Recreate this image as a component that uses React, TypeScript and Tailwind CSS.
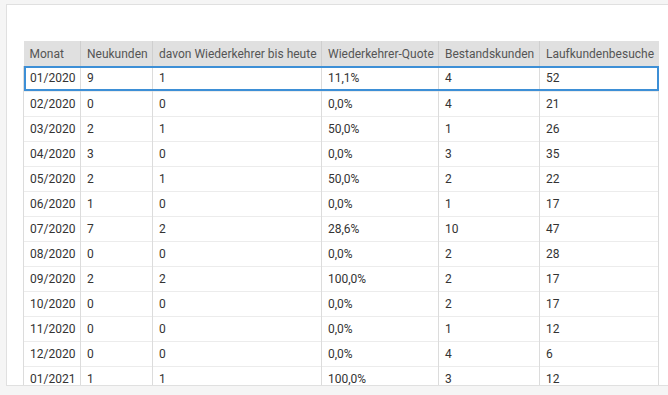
const rows: string[][] = [
  ["01/2020", "9", "1", "11,1%", "4", "52"],
  ["02/2020", "0", "0", "0,0%", "4", "21"],
  ["03/2020", "2", "1", "50,0%", "1", "26"],
  ["04/2020", "3", "0", "0,0%", "3", "35"],
  ["05/2020", "2", "1", "50,0%", "2", "22"],
  ["06/2020", "1", "0", "0,0%", "1", "17"],
  ["07/2020", "7", "2", "28,6%", "10", "47"],
  ["08/2020", "0", "0", "0,0%", "2", "28"],
  ["09/2020", "2", "2", "100,0%", "2", "17"],
  ["10/2020", "0", "0", "0,0%", "2", "17"],
  ["11/2020", "0", "0", "0,0%", "1", "12"],
  ["12/2020", "0", "0", "0,0%", "4", "6"],
  ["01/2021", "1", "1", "100,0%", "3", "12"],
];

const headers = [
  "Monat",
  "Neukunden",
  "davon Wiederkehrer bis heute",
  "Wiederkehrer-Quote",
  "Bestandskunden",
  "Laufkundenbesuche",
];

const widths = ["w-[57px]", "w-[72px]", "w-[169px]", "w-[117px]", "w-[101px]", "w-[119px]"];

export default function App() {
  return (
    <div
      className="w-[668px] h-[395px] bg-[#f5f5f5] pl-[6px] pt-[4px] overflow-hidden"
      style={{ fontFamily: "Roboto, 'Liberation Sans', sans-serif" }}
    >
      <div className="h-[382px] bg-white border-l border-t border-b border-[#e0e0e0] pl-[16px] pt-[36px] overflow-hidden">
        <table className="table-fixed border-collapse w-[635px] text-[12px]">
          <thead>
            <tr className="h-[25px] bg-[#e0e0e0] text-[#555]">
              {headers.map((h, i) => (
                <th
                  key={h}
                  className={`${widths[i]} font-normal text-left px-[6px] border-l border-[#cfcfcf] first:border-l-0 whitespace-nowrap`}
                >
                  {h}
                </th>
              ))}
            </tr>
          </thead>
          <tbody className="text-[#333]">
            {rows.map((r, ri) => (
              <tr
                key={r[0]}
                className={
                  ri === 0
                    ? "h-[25px] outline-2 -outline-offset-2 outline-[#3d8fd6]"
                    : "h-[25px] border-t border-[#ececec]"
                }
              >
                {r.map((c, ci) => (
                  <td
                    key={ci}
                    className="px-[6px] border-l border-r border-[#dcdcdc] whitespace-nowrap"
                  >
                    {c}
                  </td>
                ))}
              </tr>
            ))}
          </tbody>
        </table>
      </div>
    </div>
  );
}
